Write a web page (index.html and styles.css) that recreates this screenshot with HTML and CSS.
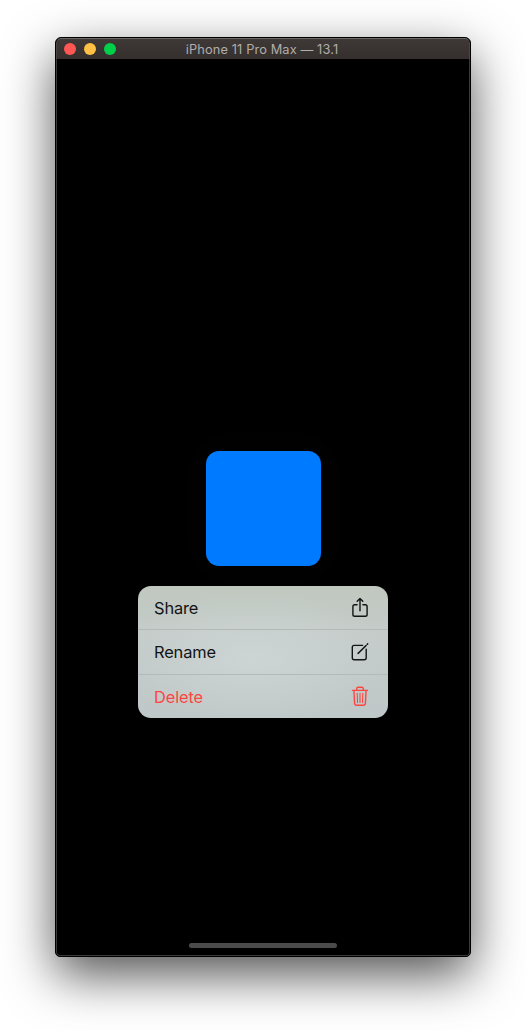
FILE: index.html
```html
<!DOCTYPE html>
<html lang="en">
<head>
<meta charset="utf-8">
<title>iPhone 11 Pro Max — 13.1</title>
<link rel="stylesheet" href="styles.css">
</head>
<body>
<main class="window">
  <header class="titlebar">
    <div class="controls">
      <span class="control close"></span>
      <span class="control minimize"></span>
      <span class="control maximize"></span>
    </div>
    <h1 class="title">iPhone 11 Pro Max — 13.1</h1>
  </header>
  <section class="screen">
    <div class="preview"></div>
    <ul class="menu">
      <li class="item">
        <span class="label">Share</span>
        <svg class="icon" width="20" height="24" viewBox="0 0 20 24">
          <path d="M7.1 8.7H4.7Q2.9 8.7 2.9 10.5v7.9q0 1.8 1.8 1.8h10.6q1.8 0 1.8-1.8v-7.9q0-1.8-1.8-1.8h-2.4M10 14.7V2.6M7.2 5.2 10 2.4l2.8 2.8"/>
        </svg>
      </li>
      <li class="item">
        <span class="label">Rename</span>
        <svg class="icon" width="20" height="24" viewBox="0 0 20 24">
          <path d="M12.6 5.4H4.2q-1.9 0-1.9 1.9v10.5q0 1.9 1.9 1.9h10.1q1.9 0 1.9-1.9V9.2"/>
          <path class="pencil" d="M8.5 13 16.1 5.5"/>
          <path class="pencil" d="m17.3 4.2.3-.3"/>
          <path class="tip" d="m7.3 14.3.6-2 1.4 1.4z"/>
        </svg>
      </li>
      <li class="item destructive">
        <span class="label">Delete</span>
        <svg class="icon" width="20" height="24" viewBox="0 0 20 24">
          <path d="M2.5 5.4h15M6.7 5.4V3.8q0-1.6 1.6-1.6h3.4q1.6 0 1.6 1.6v1.6M3.9 5.4l.7 12.9q.1 2 2 2h6.8q1.9 0 2-2l.7-12.9"/>
          <path class="rib" d="m7.2 8.2.3 9.3M10 8.2v9.3M12.8 8.2l-.3 9.3"/>
        </svg>
      </li>
    </ul>
    <div class="home"></div>
  </section>
</main>
</body>
</html>
```
FILE: styles.css
```css
* { box-sizing: border-box; }
body {
  margin: 0;
  height: 1030px;
  padding: 37px 55px 0;
  overflow: hidden;
  background: #fff;
  font-family: Inter, "Liberation Sans", sans-serif;
}
.window {
  width: 416px;
  height: 920px;
  border: 1px solid #000;
  border-radius: 6px 6px 5px 5px;
  overflow: hidden;
  display: flex;
  flex-direction: column;
  background: #000;
  box-shadow: 0 18px 50px rgba(0, 0, 0, .68);
}
.titlebar {
  flex: none;
  height: 21px;
  display: grid;
  grid-template-columns: 60px 1fr 62px;
  align-items: center;
  border: 1px solid #4a4644;
  border-top-color: #6b6765;
  border-bottom: 0;
  border-radius: 5px 5px 0 0;
  background: linear-gradient(#3e3936, #35302e);
}
.controls { display: flex; gap: 8px; padding-left: 7px; }
.control { width: 12px; height: 12px; border-radius: 50%; }
.close { background: #ff5753; }
.minimize { background: #ffc043; }
.maximize { background: #00cf49; }
.title {
  margin: 0;
  padding-top: 1px;
  text-align: center;
  font-size: 12.8px;
  font-weight: 400;
  letter-spacing: .12px;
  line-height: 19px;
  white-space: nowrap;
  color: #b1adab;
}
.screen {
  flex: 1;
  display: flex;
  flex-direction: column;
  align-items: center;
  padding: 392px 0 7px;
  border: 1px solid #3a3a3a;
  border-top: 0;
  border-radius: 0 0 4px 4px;
  background: #000;
}
.preview {
  width: 115px;
  height: 115px;
  border-radius: 13px;
  background: #007aff;
  box-shadow: 0 0 45px 20px #000200;
}
.menu {
  width: 250px;
  height: 132px;
  margin: 20px 0 0;
  padding: 0;
  list-style: none;
  border-radius: 13px;
  overflow: hidden;
  display: grid;
  grid-template-rows: 44px 45px 43px;
  background:
    radial-gradient(ellipse 140px 65px at 46% 55%, rgba(208, 216, 215, .8), rgba(208, 216, 215, 0)),
    linear-gradient(#c0c8bf, #c4cbc9 35%, #bfc8c8);
}
.item {
  display: flex;
  align-items: center;
  justify-content: space-between;
  padding: 0 18px 0 16px;
  border-bottom: 1px solid #b3bbba;
  color: #111414;
}
.item:last-child { border-bottom: 0; }
.label { font-size: 16.4px; line-height: 22px; letter-spacing: -.12px; }
.destructive { color: #ff453f; }
.icon {
  fill: none;
  stroke: currentColor;
  stroke-width: 1.4;
  stroke-linecap: round;
  stroke-linejoin: round;
}
.pencil { stroke-width: 1.6; }
.tip { fill: currentColor; stroke: none; }
.rib { stroke-width: 1.1; }
.home {
  width: 148px;
  height: 5px;
  margin-top: auto;
  border-radius: 3px;
  background: #4b4b4b;
}
```
